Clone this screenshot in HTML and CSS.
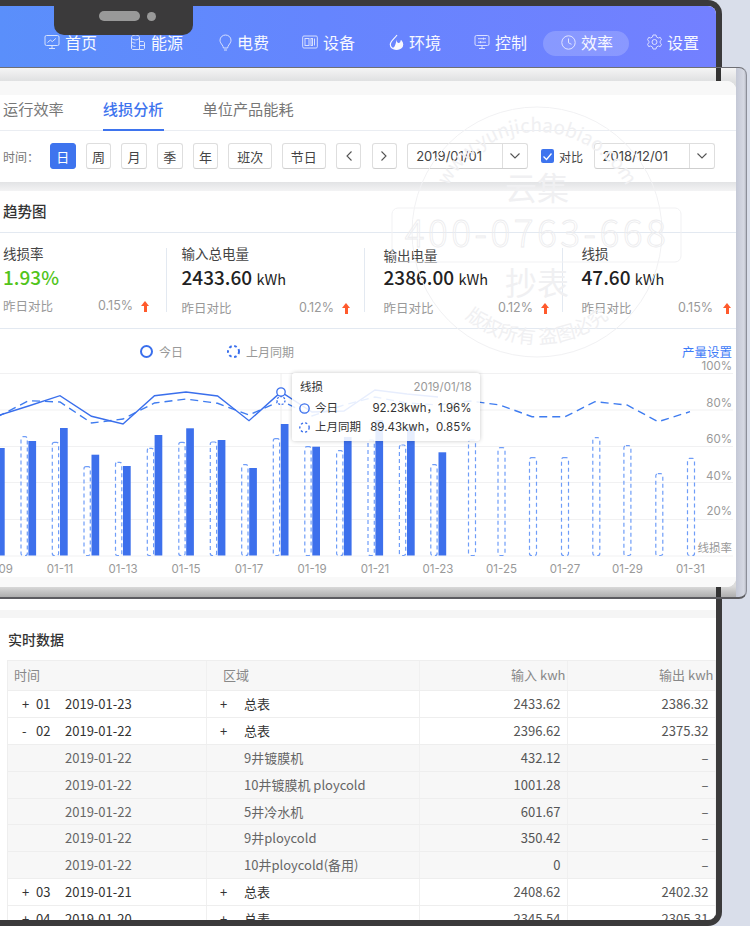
FILE: index.html
```html
<!DOCTYPE html>
<html lang="zh-CN">
<head>
    <meta charset="UTF-8">
    <meta name="viewport" content="width=device-width, initial-scale=1.0">
    <title>线损分析</title>
    <link rel="stylesheet" href="styles.css">
</head>
<body>
<div class="device">
    <div class="notch"><span class="notch-pill"></span><span class="notch-dot"></span></div>

    <header class="topbar">
        <nav class="nav">
            <a class="nav-item">
                <svg class="ico" width="16" height="16" viewBox="0 0 16 16"><rect x="1" y="1.500" width="14" height="10" rx="1.500"/><path d="M3.500 8.500l2.800-2.400 2 1.500 3.600-3.200M8 11.500v2.500M5 14.500h6"/></svg>
                <span>首页</span>
            </a>
            <a class="nav-item">
                <svg class="ico" width="16" height="17" viewBox="0 0 16 17"><path d="M1.500 3.500C1.500 2 3.200 1 5.500 1s4 1 4 2.500v12H3c-.9 0-1.500-.6-1.500-1.500zM1.500 3.500c0 1.400 1.800 2.400 4 2.400s4-1 4-2.400M1.500 7.500c.8 1 2.300 1.600 4 1.600M1.500 11c.8 1 2.300 1.500 4 1.500M9.500 7.500h3.500c.9 0 1.500.6 1.500 1.500v5c0 .9-.6 1.500-1.500 1.500H9.500M9.500 11.500h5"/></svg>
                <span>能源</span>
            </a>
            <a class="nav-item">
                <svg class="ico" width="13" height="17" viewBox="0 0 13 17"><path d="M6.500 1C3.500 1 1 3.300 1 6.200c0 2.100 1.200 3.400 2.200 4.800.7 1 1 2 1.200 3h4.200c.2-1 .5-2 1.200-3 1-1.400 2.200-2.700 2.200-4.800C12 3.300 9.500 1 6.500 1zM5 16h3"/></svg>
                <span>电费</span>
            </a>
            <a class="nav-item">
                <svg class="ico" width="16" height="14" viewBox="0 0 16 14"><rect x=".7" y="1" width="14.600" height="12" rx="1.200"/><rect x="3" y="3.500" width="4" height="7"/><rect x="9" y="3.500" width="1.500" height="7"/><path d="M12.500 3.500v7"/></svg>
                <span>设备</span>
            </a>
            <a class="nav-item">
                <svg width="15" height="16" viewBox="0 0 15 16"><path fill="none" stroke="#fff" stroke-width="1.200" d="M8 1C5.500 4.500 1.300 7.300 1.300 10.500c0 2.800 2.800 4.800 6.200 4.800s6.200-2 6.200-4.800c0-1.500-.8-2.800-1.900-4"/><path fill="#fff" d="M7.800 5.500c-.4 2.500 1 3.800 2.200 3.500 1.200-.3 1.600-1.500 1.800-2.400 1.200 1.100 1.900 2.500 1.900 3.900 0 2.800-2.800 4.800-6.200 4.800-1.600 0-3-.5-3.800-1.300 2.600-.7 2.800-4.500 4.100-8.500z"/></svg>
                <span>环境</span>
            </a>
            <a class="nav-item">
                <svg class="ico" width="16" height="16" viewBox="0 0 16 16"><rect x="1" y="1.500" width="14" height="10" rx="1.500"/><path d="M8 11.500v2.500M5 14.500h6M4 4.700h8M4 8.200h8M9.500 3.700v2M6.500 7.200v2"/></svg>
                <span>控制</span>
            </a>
            <a class="nav-item is-active">
                <svg class="ico" width="15" height="15" viewBox="0 0 15 15"><circle cx="7.500" cy="7.500" r="6.700"/><path d="M7.500 3.500v4.300l3 1.500"/></svg>
                <span>效率</span>
            </a>
            <a class="nav-item">
                <svg class="ico" width="15" height="16" viewBox="0 0 15 16"><path d="M6 1h3l.5 2 1.800 1 2-.6 1.200 2.400-1.400 1.400v1.600l1.400 1.400-1.200 2.400-2-.6-1.800 1L9 15H6l-.5-2-1.800-1-2 .6L.5 10.200l1.400-1.400V7.200L.5 5.800l1.200-2.400 2 .6 1.800-1z"/><circle cx="7.500" cy="8" r="2.500"/></svg>
                <span>设置</span>
            </a>
        </nav>
    </header>

    <div class="glass">
        <div class="card">
            <div class="card-top"></div>
            <div class="tabs">
                <a class="tab">运行效率</a>
                <a class="tab is-on">线损分析</a>
                <a class="tab">单位产品能耗</a>
            </div>
            <div class="toolbar">
                <span class="tool-label">时间：</span>
                <a class="btn btn-on">日</a>
                <a class="btn">周</a>
                <a class="btn">月</a>
                <a class="btn">季</a>
                <a class="btn">年</a>
                <a class="btn btn-wide">班次</a>
                <a class="btn btn-wide">节日</a>
                <a class="btn"><svg width="8" height="12" viewBox="0 0 8 12"><path class="chev" d="M6.500 1.500L2 6l4.500 4.500"/></svg></a>
                <a class="btn"><svg width="8" height="12" viewBox="0 0 8 12"><path class="chev" d="M1.500 1.500L6 6l-4.500 4.500"/></svg></a>
                <div class="date">
                    <span class="date-val">2019/01/01</span>
                    <span class="date-arrow"><svg width="12" height="8" viewBox="0 0 12 8"><path class="chev" d="M1.500 1.500L6 6l4.500-4.500"/></svg></span>
                </div>
                <label class="check">
                    <span class="check-box"><svg width="11" height="9" viewBox="0 0 11 9"><path d="M1.500 4.500l3 3 5-6"/></svg></span>
                    对比
                </label>
                <div class="date">
                    <span class="date-val">2018/12/01</span>
                    <span class="date-arrow"><svg width="12" height="8" viewBox="0 0 12 8"><path class="chev" d="M1.500 1.500L6 6l4.500-4.500"/></svg></span>
                </div>
            </div>
            <div class="strip"></div>

            <h2 class="panel-title">趋势图</h2>
            <div class="metrics">
                <div class="metric">
                    <div class="metric-name">线损率</div>
                    <div class="metric-val is-green">1.93%</div>
                    <div class="metric-cmp"><span>昨日对比</span><span class="cmp-right">0.15%<i class="up"></i></span></div>
                </div>
                <div class="metric">
                    <div class="metric-name">输入总电量</div>
                    <div class="metric-val">2433.60 <small>kWh</small></div>
                    <div class="metric-cmp"><span>昨日对比</span><span class="cmp-right">0.12%<i class="up"></i></span></div>
                </div>
                <div class="metric">
                    <div class="metric-name is-low">输出电量</div>
                    <div class="metric-val">2386.00 <small>kWh</small></div>
                    <div class="metric-cmp"><span>昨日对比</span><span class="cmp-right">0.12%<i class="up"></i></span></div>
                </div>
                <div class="metric">
                    <div class="metric-name">线损</div>
                    <div class="metric-val">47.60 <small>kWh</small></div>
                    <div class="metric-cmp"><span>昨日对比</span><span class="cmp-right">0.15%<i class="up"></i></span></div>
                </div>
            </div>

            <div class="legend">
                <span class="legend-item"><svg class="dot" width="13" height="13" viewBox="0 0 13 13"><circle cx="6.500" cy="6.500" r="5.500"/></svg>今日</span>
                <span class="legend-item"><svg class="dot dot-dash" width="13" height="13" viewBox="0 0 13 13"><circle cx="6.500" cy="6.500" r="5.500"/></svg>上月同期</span>
                <a class="legend-link">产量设置</a>
            </div>

            <div class="chart">
                <svg class="plot" width="736" height="217" viewBox="0 360 736 217">
                    <g class="grid">
                        <path d="M0 373.500H733M0 410H733M0 446.500H733M0 482.500H733M0 519.500H733M0 556H733"/>
                    </g>
                    <path class="cursor" d="M281 373V556"/>
                    <g class="bars">
                        <rect x="-3" y="448" width="7.700" height="107.500"/>
                        <rect x="28.400" y="441" width="7.700" height="114.500"/>
                        <rect x="60" y="428" width="7.700" height="127.500"/>
                        <rect x="91.500" y="454.700" width="7.700" height="100.800"/>
                        <rect x="123" y="466" width="7.700" height="89.500"/>
                        <rect x="154.600" y="435" width="7.700" height="120.500"/>
                        <rect x="186.200" y="428.300" width="7.700" height="127.200"/>
                        <rect x="217.700" y="440" width="7.700" height="115.500"/>
                        <rect x="249.200" y="468" width="7.700" height="87.500"/>
                        <rect x="280.800" y="424" width="7.700" height="131.500"/>
                        <rect x="312.300" y="446.700" width="7.700" height="108.800"/>
                        <rect x="343.900" y="437" width="7.700" height="118.500"/>
                        <rect x="375.400" y="420" width="7.700" height="135.500"/>
                        <rect x="407" y="427" width="7.700" height="128.500"/>
                        <rect x="438.500" y="452.300" width="7.700" height="103.200"/>
                    </g>
                    <g class="bars-dash">
                        <rect x="21" y="436.700" width="6.300" height="118.800" rx="2"/>
                        <rect x="52.300" y="442.300" width="6.300" height="113.200" rx="2"/>
                        <rect x="84" y="466.700" width="6.300" height="88.800" rx="2"/>
                        <rect x="115.500" y="462.300" width="6.300" height="93.200" rx="2"/>
                        <rect x="147.300" y="448.300" width="6.300" height="107.200" rx="2"/>
                        <rect x="178.800" y="442.300" width="6.300" height="113.200" rx="2"/>
                        <rect x="210.300" y="442" width="6.300" height="113.500" rx="2"/>
                        <rect x="241.700" y="464.700" width="6.300" height="90.800" rx="2"/>
                        <rect x="273.300" y="438.700" width="6.300" height="116.800" rx="2"/>
                        <rect x="304.800" y="446.700" width="6.300" height="108.800" rx="2"/>
                        <rect x="336.600" y="450.700" width="6.300" height="104.800" rx="2"/>
                        <rect x="368" y="440" width="6.300" height="115.500" rx="2"/>
                        <rect x="399.400" y="445" width="6.300" height="110.500" rx="2"/>
                        <rect x="430.800" y="464.700" width="6.300" height="90.800" rx="2"/>
                        <rect x="468.500" y="440" width="7" height="115.500" rx="2"/>
                        <rect x="498" y="447.700" width="7" height="107.800" rx="2"/>
                        <rect x="529.500" y="457.700" width="7" height="97.800" rx="2"/>
                        <rect x="561.500" y="457.700" width="7" height="97.800" rx="2"/>
                        <rect x="592.800" y="437.700" width="7" height="117.800" rx="2"/>
                        <rect x="623.900" y="445.700" width="7" height="109.800" rx="2"/>
                        <rect x="655.800" y="473.700" width="7" height="81.800" rx="2"/>
                        <rect x="687.500" y="458.300" width="7" height="97.200" rx="2"/>
                    </g>
                    <polyline class="line-dash" points="-3,417 28.500,400.700 60,402 91.500,423 123,419 154.500,403 186,399 217.600,403.300 249,415 281,400.700 312,416 344,405 375,397 407,403 438,405 470,401 500,405 532,416.700 565,416.700 595,401.700 627,405 658,421.700 690,411.700"/>
                    <polyline class="line" points="-3,416 28.500,406 60,395.700 91.500,416.300 123,424 154.500,395.700 186,392 217.600,396 249,420.700 281,392 312,412 344,411 375,390 407,394 438,397"/>
                    <circle class="mark-dash" cx="281" cy="400.500" r="4"/>
                    <circle class="mark" cx="281" cy="392" r="4.200"/>
                    <g class="y-labels">
                        <text x="732" y="370">100%</text>
                        <text x="732" y="407">80%</text>
                        <text x="732" y="443">60%</text>
                        <text x="732" y="480">40%</text>
                        <text x="732" y="515">20%</text>
                        <text x="732" y="552">线损率</text>
                    </g>
                    <g class="x-labels">
                        <text x="-3" y="573">01-09</text>
                        <text x="60" y="573">01-11</text>
                        <text x="123" y="573">01-13</text>
                        <text x="186" y="573">01-15</text>
                        <text x="249" y="573">01-17</text>
                        <text x="312" y="573">01-19</text>
                        <text x="375" y="573">01-21</text>
                        <text x="438" y="573">01-23</text>
                        <text x="501.500" y="573">01-25</text>
                        <text x="565" y="573">01-27</text>
                        <text x="627.500" y="573">01-29</text>
                        <text x="690.500" y="573">01-31</text>
                    </g>
                </svg>
                <div class="tip">
                    <div class="tip-row tip-head"><span>线损</span><span class="tip-date">2019/01/18</span></div>
                    <div class="tip-row"><span class="tip-name"><svg class="dot dot-sm" width="11" height="11" viewBox="0 0 13 13"><circle cx="6.500" cy="6.500" r="5.500"/></svg>今日</span><span>92.23kwh，1.96%</span></div>
                    <div class="tip-row"><span class="tip-name"><svg class="dot dot-sm dot-dash" width="11" height="11" viewBox="0 0 13 13"><circle cx="6.500" cy="6.500" r="5.500"/></svg>上月同期</span><span>89.43kwh，0.85%</span></div>
                </div>
            </div>
            <div class="card-foot"></div>

            <svg class="seal" width="300" height="270" viewBox="390 100 300 270">
                <defs>
                    <path id="sealTop" d="M437 232A100 100 0 0 1 637 232"/>
                    <path id="sealBottom" d="M435 278A112 112 0 0 0 639 278"/>
                </defs>
                <circle cx="537" cy="232" r="125"/>
                <rect x="392" y="208" width="289" height="54" rx="6"/>
                <text class="seal-arc"><textPath href="#sealTop" startOffset="50%">www.yunjichaobiao.com</textPath></text>
                <text class="seal-big" x="537" y="200">云集</text>
                <text class="seal-tel" x="537" y="247">400-0763-668</text>
                <text class="seal-big" x="537" y="295">抄表</text>
                <text class="seal-arc"><textPath href="#sealBottom" startOffset="50%">版权所有 盗图必究</textPath></text>
            </svg>
        </div>
    </div>

    <section class="data">
        <div class="data-strip"></div>
        <h2 class="data-title">实时数据</h2>
        <div class="tbl">
            <div class="row row-head">
                <div class="c">时间</div>
                <div class="c c-area-head">区域</div>
                <div class="c c-num">输入 kwh</div>
                <div class="c c-num">输出 kwh</div>
            </div>
            <div class="row">
                <div class="c c-dark c-time"><span class="tg">+</span><span class="no">01</span>2019-01-23</div>
                <div class="c c-dark c-area"><span class="tg2">+</span>总表</div>
                <div class="c c-num c-val">2433.62</div>
                <div class="c c-num c-val">2386.32</div>
            </div>
            <div class="row">
                <div class="c c-dark c-time"><span class="tg">-</span><span class="no">02</span>2019-01-22</div>
                <div class="c c-dark c-area"><span class="tg2">+</span>总表</div>
                <div class="c c-num c-val">2396.62</div>
                <div class="c c-num c-val">2375.32</div>
            </div>
            <div class="row row-sub">
                <div class="c c-time"><span class="tg"></span><span class="no"></span>2019-01-22</div>
                <div class="c c-area"><span class="tg2"></span>9井镀膜机</div>
                <div class="c c-num c-val">432.12</div>
                <div class="c c-num c-val">–</div>
            </div>
            <div class="row row-sub">
                <div class="c c-time"><span class="tg"></span><span class="no"></span>2019-01-22</div>
                <div class="c c-area"><span class="tg2"></span>10井镀膜机 ploycold</div>
                <div class="c c-num c-val">1001.28</div>
                <div class="c c-num c-val">–</div>
            </div>
            <div class="row row-sub">
                <div class="c c-time"><span class="tg"></span><span class="no"></span>2019-01-22</div>
                <div class="c c-area"><span class="tg2"></span>5井冷水机</div>
                <div class="c c-num c-val">601.67</div>
                <div class="c c-num c-val">–</div>
            </div>
            <div class="row row-sub">
                <div class="c c-time"><span class="tg"></span><span class="no"></span>2019-01-22</div>
                <div class="c c-area"><span class="tg2"></span>9井ploycold</div>
                <div class="c c-num c-val">350.42</div>
                <div class="c c-num c-val">–</div>
            </div>
            <div class="row row-sub">
                <div class="c c-time"><span class="tg"></span><span class="no"></span>2019-01-22</div>
                <div class="c c-area"><span class="tg2"></span>10井ploycold(备用)</div>
                <div class="c c-num c-val">0</div>
                <div class="c c-num c-val">–</div>
            </div>
            <div class="row">
                <div class="c c-dark c-time"><span class="tg">+</span><span class="no">03</span>2019-01-21</div>
                <div class="c c-dark c-area"><span class="tg2">+</span>总表</div>
                <div class="c c-num c-val">2408.62</div>
                <div class="c c-num c-val">2402.32</div>
            </div>
            <div class="row">
                <div class="c c-dark c-time"><span class="tg">+</span><span class="no">04</span>2019-01-20</div>
                <div class="c c-dark c-area"><span class="tg2">+</span>总表</div>
                <div class="c c-num c-val">2345.54</div>
                <div class="c c-num c-val">2305.31</div>
            </div>
        </div>
    </section>
</div>
</body>
</html>
```

FILE: styles.css
```css
* {
    box-sizing: border-box;
}
html, body {
    margin: 0;
    height: 926px;
    overflow: hidden;
}
body {
    background: #d9deea;
    font-family: "Noto Sans CJK SC", "Liberation Sans", sans-serif;
    color: #333;
}
h2 {
    margin: 0;
}
i {
    font-style: normal;
}

/* device frame */
.device {
    position: relative;
    display: flex;
    flex-direction: column;
    width: 722px;
    height: 926px;
    background: #fff;
    border: 6px solid #3b3a3b;
    border-left: 0;
    border-radius: 0 14px 14px 0;
}
.notch {
    position: absolute;
    z-index: 3;
    left: 54px;
    top: -6px;
    width: 139px;
    height: 35px;
    background: #3b3a3b;
    border-radius: 0 0 10px 10px;
}
.notch-pill {
    position: absolute;
    left: 45px;
    top: 11px;
    width: 41px;
    height: 10px;
    background: #999;
    border-radius: 5px;
}
.notch-dot {
    position: absolute;
    left: 93px;
    top: 12px;
    width: 9px;
    height: 9px;
    background: #999;
    border-radius: 50%;
}

/* top nav */
.topbar {
    flex: none;
    height: 61px;
    padding-top: 25px;
    background: linear-gradient(90deg, #5a8ffb, #6585fe 45%, #7380ff);
    border-radius: 0 8px 0 0;
}
.nav {
    display: flex;
    padding-left: 27px;
}
.nav-item {
    display: flex;
    align-items: center;
    justify-content: flex-end;
    gap: 5px;
    width: 86px;
    height: 25px;
    padding: 0 16px 3px 0;
    font-size: 16px;
    color: #fff;
    border-radius: 13px;
    opacity: .95;
}
.nav-item.is-active {
    background: rgba(255, 255, 255, .2);
}
.ico {
    fill: none;
    stroke: #fff;
    stroke-width: 1;
    opacity: .8;
}

/* magnified panel */
.glass {
    flex: none;
    width: 767px;
    height: 532px;
    margin-left: -20px;
    padding: 13px 10px 11px 0;
    border-top: 1px solid #6f6f74;
    border-right: 1px solid #8c8f99;
    border-bottom: 2px solid #5c5c60;
    border-radius: 0 8px 8px 0;
    background:
        linear-gradient(90deg, transparent 736px, #333 736px, #333 741px, transparent 741px),
        linear-gradient(90deg, transparent 756px, #c4c8d6 756px, #d6d9e3 764px, #a4a7b2 767px),
        linear-gradient(180deg, #f5f5f5, #dedfe0 14px, #dcdcdc 518px, #aaa 530px);
}
.card {
    position: relative;
    height: 506px;
    background: #fff;
    border-radius: 0 9px 9px 0;
    overflow: hidden;
}
.card-top {
    height: 14px;
    background: #f8f8f8;
}
.tabs {
    display: flex;
    gap: 39px;
    height: 36px;
    padding-left: 23px;
    border-bottom: 1px solid #eaedf2;
}
.tab {
    height: 36px;
    font-size: 15.200px;
    line-height: 27px;
    color: #777;
}
.tab.is-on {
    color: #3e74ee;
    font-weight: 500;
    border-bottom: 2px solid #3e74ee;
}

.toolbar {
    display: flex;
    align-items: center;
    gap: 10.200px;
    height: 51px;
    padding: 0 0 1px 23px;
    font-family: Inter, "Noto Sans CJK SC", sans-serif;
}
.tool-label {
    width: 37px;
    margin-right: -.200px;
    font-size: 12px;
    color: #777;
}
.btn {
    display: flex;
    align-items: center;
    justify-content: center;
    width: 25.500px;
    height: 26px;
    font-size: 13px;
    color: #444;
    background: #fff;
    border: 1px solid #dedede;
    border-bottom-color: #cfcfcf;
    border-radius: 3px;
}
.btn-wide {
    width: 43.500px;
}
.btn-on {
    color: #fff;
    background: #3e74ee;
    border-color: #3e74ee;
}
.chev {
    fill: none;
    stroke: #555;
    stroke-width: 1.100;
}
.date {
    display: flex;
    width: 121px;
    height: 26px;
    font-size: 13px;
    line-height: 24px;
    color: #444;
    border: 1px solid #dedede;
    border-bottom-color: #cfcfcf;
    border-radius: 3px;
}
.date-val {
    flex: 1;
    padding-left: 8px;
}
.date-arrow {
    display: flex;
    align-items: center;
    justify-content: center;
    width: 25px;
    border-left: 1px solid #dedede;
}
.check {
    display: flex;
    align-items: center;
    gap: 5px;
    margin: 0 .500px 0 2.500px;
    font-size: 12px;
    color: #444;
}
.check-box {
    display: flex;
    align-items: center;
    justify-content: center;
    width: 13px;
    height: 14px;
    background: #3e74ee;
    border-radius: 2px;
}
.check-box path {
    fill: none;
    stroke: #fff;
    stroke-width: 1.300;
}
.strip {
    height: 9px;
    background: linear-gradient(180deg, #e2e3e5, #f3f3f4);
}

.panel-title {
    height: 42px;
    padding-left: 23px;
    font-size: 14.500px;
    font-weight: 500;
    line-height: 39px;
    color: #333;
    border-bottom: 1px solid #e3e9f1;
}

/* metric cards */
.metrics {
    display: flex;
    height: 96px;
    padding: 15px 0 0 23px;
    border-bottom: 1px solid #e3e9f1;
}
.metric {
    width: 198px;
    height: 64px;
    padding: 0 12px 0 18.500px;
    border-left: 1px solid #e3e9f1;
}
.metric:first-child {
    width: 163px;
    padding: 0 16px 0 0;
    border-left: 0;
}
.metric:nth-child(2) {
    padding: 0 13px 0 14.500px;
}
.metric:last-child {
    width: 174px;
    padding-right: 4px;
}
.metric:last-child .cmp-right {
    gap: 10px;
}
.metric-name {
    margin-top: -2px;
    font-size: 13.500px;
    line-height: 15px;
    color: #444;
}
.metric-name.is-low {
    position: relative;
    top: 2px;
}
.metric-val {
    margin-top: 3px;
    font-size: 19px;
    font-weight: 500;
    line-height: 26px;
    color: #222;
}
.metric-val small {
    font-size: 14.500px;
    font-weight: 400;
}
.metric-val.is-green {
    color: #52c41a;
}
.metric-cmp {
    display: flex;
    justify-content: space-between;
    align-items: center;
    margin-top: 7px;
    font-size: 12.500px;
    line-height: 18px;
    color: #999;
}
.cmp-right {
    display: flex;
    align-items: center;
    gap: 8px;
    font-family: Inter, "Noto Sans CJK SC", sans-serif;
}
.up {
    position: relative;
    width: 9px;
    height: 11px;
    background: linear-gradient(#ff5a2c, #ff5a2c) center 4px / 3px 7px no-repeat;
}
.up::before {
    content: "";
    position: absolute;
    left: 0;
    top: 0;
    border: 4.500px solid transparent;
    border-top: 0;
    border-bottom: 5px solid #ff5a2c;
}

/* legend */
.legend {
    position: relative;
    z-index: 2;
    display: flex;
    align-items: center;
    height: 31px;
    padding: 13px 4px 0 160px;
    font-size: 12px;
    color: #999;
}
.legend-item {
    display: flex;
    align-items: center;
    gap: 6px;
    margin-right: 44px;
}
.legend-link {
    margin-left: auto;
    font-size: 12.500px;
    color: #3f7cf7;
}
.dot {
    flex: none;
    fill: none;
    stroke: #3a6fec;
    stroke-width: 2;
}
.dot-dash {
    stroke-dasharray: 2.600 2.600;
}
.dot-sm {
    margin-right: 5px;
    stroke-width: 1.600;
}

/* chart */
.chart {
    position: relative;
    margin-left: 20px;
    height: 217px;
}
.plot {
    display: block;
    font-family: Inter, "Noto Sans CJK SC", sans-serif;
}
.grid path {
    fill: none;
    stroke: #f1f1f2;
    stroke-width: 1;
}
.cursor {
    stroke: #eee;
    stroke-width: 1;
}
.bars rect {
    fill: #3d70ec;
}
.bars-dash rect {
    fill: #fff;
    fill-opacity: 0;
    stroke: #6f9df8;
    stroke-width: 1.200;
    stroke-dasharray: 4 3;
}
.line,
.line-dash {
    fill: none;
    stroke: #3a6fec;
    stroke-width: 1.400;
}
.line-dash {
    stroke: #3f7cf0;
    stroke-dasharray: 8 5;
}
.mark,
.mark-dash {
    fill: #fff;
    stroke: #3a6fec;
    stroke-width: 1.300;
}
.mark-dash {
    stroke-dasharray: 2 1.500;
}
.y-labels text {
    font-size: 11.500px;
    fill: #999;
    text-anchor: end;
}
.x-labels text {
    font-size: 11.500px;
    fill: #999;
    text-anchor: middle;
}
.tip {
    position: absolute;
    left: 292px;
    top: 13px;
    width: 187.500px;
    height: 68px;
    padding: 5px 8px 0 7px;
    font-family: Inter, "Noto Sans CJK SC", sans-serif;
    font-size: 11.500px;
    line-height: 19px;
    color: #333;
    background: rgba(255, 255, 255, .88);
    border-radius: 3px;
    box-shadow: 0 0 4px rgba(0, 0, 0, .22);
}
.tip-row {
    display: flex;
    justify-content: space-between;
    white-space: nowrap;
}
.tip-name {
    display: flex;
    align-items: center;
}
.tip-head {
    margin-bottom: 2px;
    padding-left: 1px;
}
.tip-date {
    color: #999;
}
.card-foot {
    height: 10px;
    background: #f9f9f9;
}

/* watermark */
.seal {
    position: absolute;
    left: 410px;
    top: 19px;
    pointer-events: none;
    fill: none;
    stroke: #f1f1f3;
    stroke-width: 1;
}
.seal text {
    stroke: none;
    fill: #f0f0f2;
    text-anchor: middle;
}
.seal-arc {
    font-size: 19px;
}
.seal-big {
    font-size: 32px;
}
.seal text.seal-tel {
    font-size: 37px;
    font-weight: 300;
    letter-spacing: 3.500px;
    fill: none;
    stroke: #ececee;
    stroke-width: .8;
}

/* realtime table */
.data {
    flex: 1;
    min-height: 0;
    padding-top: 11px;
    padding-left: 7px;
    overflow: hidden;
    border-radius: 0 0 8px 0;
}
.data-strip {
    height: 8px;
    margin-left: -7px;
    background: #f5f5f5;
}
.data-title {
    height: 42px;
    padding-left: 1px;
    font-size: 14px;
    font-weight: 500;
    line-height: 43px;
    color: #333;
}
.tbl {
    width: 709px;
    border-top: 1px solid #eee;
    border-left: 1px solid #eee;
}
.row {
    display: grid;
    grid-template-columns: 199px 213px 148px 148px;
    height: 26.900px;
    font-size: 13px;
    line-height: 25px;
    border-bottom: 1px solid #eee;
}
.row-head {
    height: 30px;
    line-height: 28px;
    color: #888;
    background: #f7f7f7;
}
.row-sub {
    background: #f7f7f7;
}
.c {
    padding: 0 6px;
    overflow: hidden;
    white-space: nowrap;
    border-right: 1px solid #f0f0f0;
}
.c-num {
    padding-right: 1.500px;
    text-align: right;
}
.c-val {
    padding-right: 6.500px;
    color: #555;
}
.c-time {
    padding-left: 14px;
    color: #666;
}
.c-area {
    padding-left: 13px;
    color: #666;
}
.c-area-head {
    padding-left: 16px;
}
.c-dark {
    color: #333;
}
.tg {
    display: inline-block;
    width: 14px;
}
.no {
    display: inline-block;
    width: 29px;
}
.tg2 {
    display: inline-block;
    width: 24px;
}
```
